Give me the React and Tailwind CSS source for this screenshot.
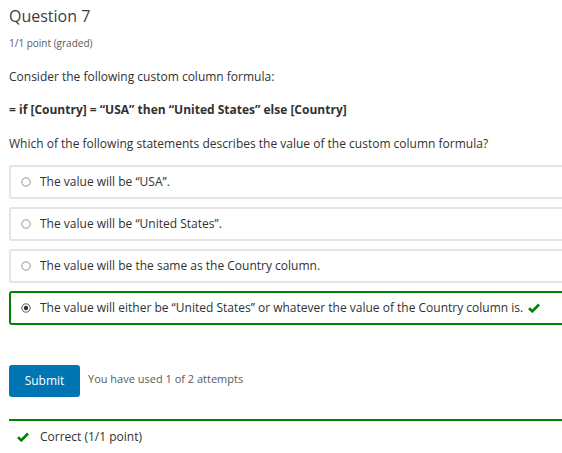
import React from "react";

function Radio({ checked }) {
  return (
    <svg width="10" height="10" viewBox="0 0 10 10" className="shrink-0">
      <circle cx="5" cy="5" r="4.2" fill="white" stroke={checked ? "#444" : "#888"} strokeWidth="0.9" />
      {checked && <circle cx="5" cy="5" r="2.2" fill="#333" />}
    </svg>
  );
}

function Check({ className }) {
  return (
    <svg width="12" height="10" viewBox="0 0 12 10" className={className}>
      <path d="M1 5.2 L4.3 8.3 L11 1.5" fill="none" stroke="#008100" strokeWidth="2.6" strokeLinejoin="miter" />
    </svg>
  );
}

const options = [
  "The value will be \u201cUSA\u201d.",
  "The value will be \u201cUnited States\u201d.",
  "The value will be the same as the Country column.",
];

export default function App() {
  return (
    <div className="w-[562px] h-[453px] overflow-hidden bg-white" style={{ fontFamily: '"Open Sans", sans-serif' }}>
      <div className="w-[580px] pl-[9px] text-[#313131]">
        <h1 className="pt-[5px] text-[16px] leading-[22px] font-normal text-[#3d3d3d]">Question 7</h1>
        <div className="mt-[10px] text-[10px] leading-[13px] text-[#5a5a5a]">1/1 point (graded)</div>
        <p className="mt-[19px] text-[12px] leading-[16px] text-[#313131]">Consider the following custom column formula:</p>
        <p className="mt-[17px] text-[12px] leading-[16px] font-bold text-[#313131]">= if [Country] = “USA” then “United States” else [Country]</p>
        <p className="mt-[18px] text-[12px] leading-[16px] text-[#313131]">Which of the following statements describes the value of the custom column formula?</p>
        <div className="mt-[13px] flex flex-col gap-[8px]">
          {options.map((o) => (
            <div key={o} className="h-[34px] border-2 border-[#e4e4e4] rounded-[3px] flex items-center gap-[9px] pl-[10px]">
              <Radio />
              <span className="text-[12px] text-[#313131]">{o}</span>
            </div>
          ))}
          <div className="h-[34px] border-2 border-[#008100] rounded-[3px] flex items-center gap-[9px] pl-[10px]">
            <Radio checked />
            <span className="text-[12px] text-[#313131]">The value will either be “United States” or whatever the value of the Country column is.</span>
            <Check className="-ml-[4px]" />
          </div>
        </div>
        <div className="mt-[40px] flex items-start gap-[8px]">
          <button className="w-[71px] h-[32px] rounded-[3px] bg-[#0075b4] text-white text-[12px]">Submit</button>
          <span className="mt-[7px] text-[11px] leading-[14px] text-[#5a5a5a]">You have used 1 of 2 attempts</span>
        </div>
        <div className="mt-[22px] border-t-2 border-[#008100] flex items-center gap-[11px] pl-[8px] pt-[7px]">
          <Check />
          <span className="text-[12px] text-[#313131]">Correct (1/1 point)</span>
        </div>
      </div>
    </div>
  );
}
